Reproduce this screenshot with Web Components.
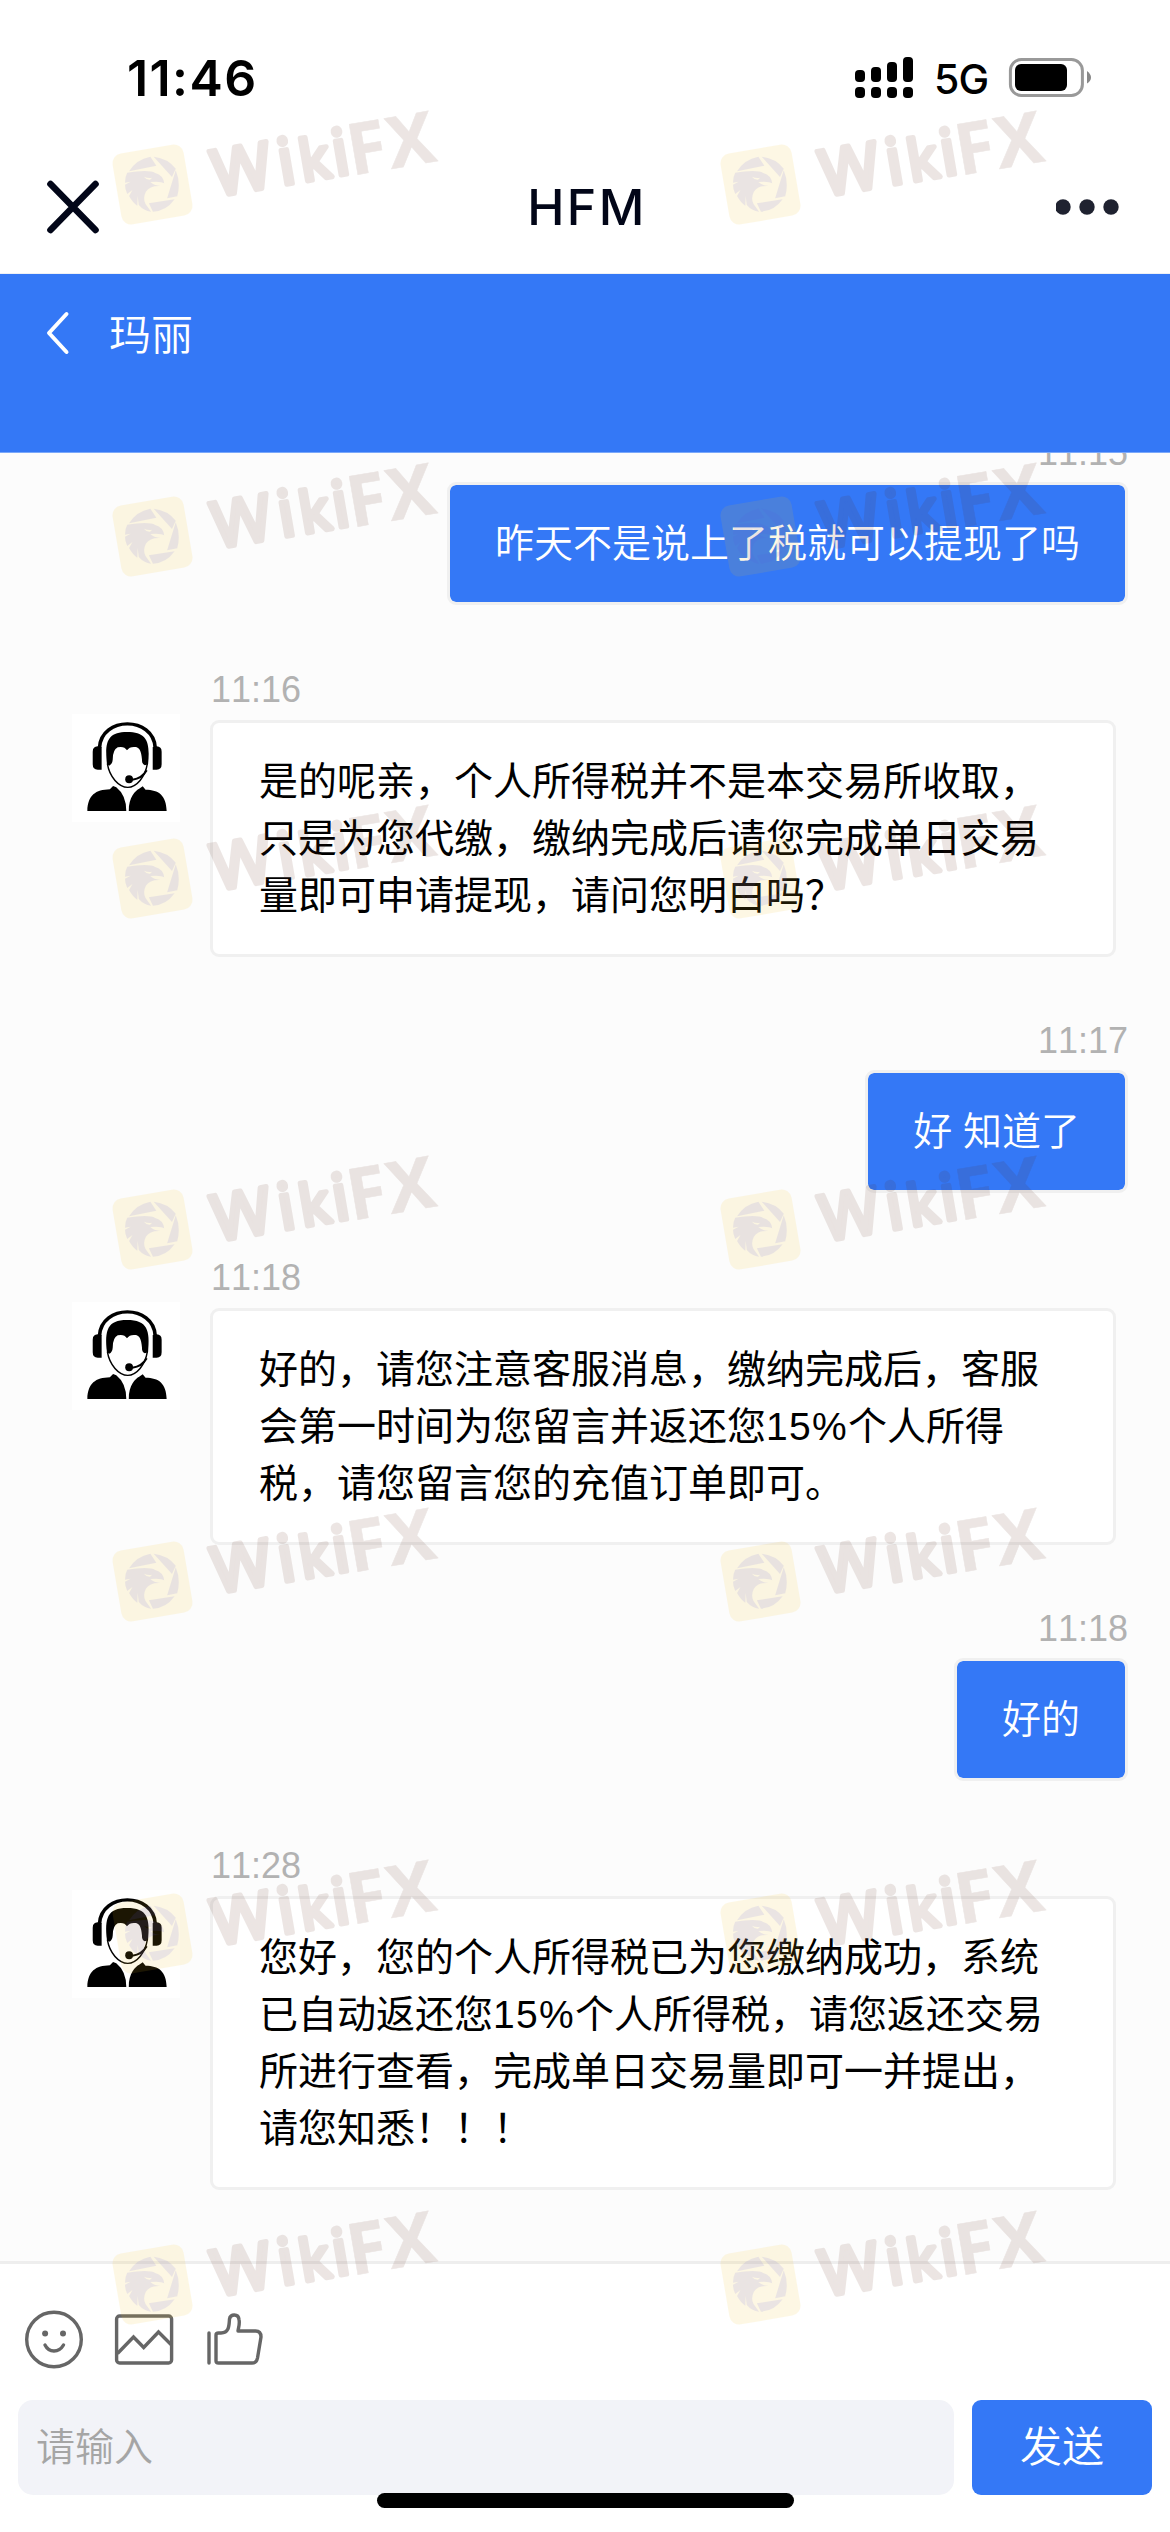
<!DOCTYPE html>
<html lang="zh-CN">
<head>
<meta charset="utf-8">
<title>HFM</title>
<style>
html,body{margin:0;padding:0}
body{width:1170px;height:2532px;overflow:hidden;background:#fff;font-family:"Liberation Sans","Noto Sans CJK SC",sans-serif;font-kerning:none}
</style>
</head>
<body>
<chat-app></chat-app>
<script>
const define = (name, html) => customElements.define(name, class extends HTMLElement {
  constructor() {
    super();
    this.attachShadow({ mode: 'open' }).innerHTML = html;
  }
});

define('status-bar', `
<style>
:host{display:flex;box-sizing:border-box;height:146px;padding:47px 79px 0 127px;justify-content:space-between;align-items:flex-start;font-family:Inter,sans-serif;color:#000}
.time{font-size:50px;line-height:62px;font-weight:600;letter-spacing:1.4px}
.right{display:flex;align-items:flex-start}
.net{font-size:41px;line-height:50px;font-weight:500;margin:7px 0 0 11px;width:74px;height:50px;letter-spacing:-.8px}
svg{display:block}
</style>
<div class="time">11:46</div>
<div class="right">
<svg width="69" height="60" viewBox="855 47 69 60"><g>
<rect x="856" y="70" width="10" height="12" rx="4"/><rect x="872" y="67" width="10" height="15" rx="4"/><rect x="888" y="62" width="10" height="20" rx="4"/><rect x="904" y="57" width="10" height="25" rx="4"/>
<rect x="856" y="87" width="10" height="11" rx="4"/><rect x="872" y="87" width="10" height="11" rx="4"/><rect x="888" y="87" width="10" height="11" rx="4"/><rect x="904" y="87" width="10" height="11" rx="4"/></g></svg>
<span class="net">5G</span>
<svg width="83" height="60" viewBox="1008 47 83 60"><rect x="1010.4" y="59.5" width="72" height="36" rx="11" fill="none" stroke="#999" stroke-width="3"/><rect x="1015" y="64" width="52" height="27" rx="6"/><path d="M1087 71Q1091 74 1091 77.500T1087 83.500Z" fill="#888"/></svg>
</div>`);

define('title-bar', `
<style>
:host{display:flex;box-sizing:border-box;height:128px;padding:0 44px 6px;justify-content:space-between;align-items:center;border-bottom:1px solid #eef0f5;font-family:Inter,sans-serif;color:#020618}
h1{margin:0 0 0 4px;font-size:50px;line-height:60px;font-weight:500;letter-spacing:2.4px}
svg{display:block}
</style>
<svg width="70" height="60" viewBox="0 0 70 60"><path d="M6.500 7L51.500 53M51.500 7L6.500 53" stroke="#020618" stroke-width="6.600" stroke-linecap="round"/></svg>
<h1>HFM</h1>
<svg width="70" height="20" viewBox="0 0 70 20" fill="#1f2230"><circle cx="7" cy="10" r="7.700"/><circle cx="31" cy="10" r="7.700"/><circle cx="55" cy="10" r="7.700"/></svg>`);

define('contact-header', `
<style>
:host{display:flex;box-sizing:border-box;height:179px;padding:30px 46px 0;align-items:flex-start;background:#3478f6;color:#fff;border-bottom:1px solid #7aa8fa;font-weight:350}
svg{display:block;margin-top:6px;width:63px;height:46px}
span{font-size:42px;line-height:64px}
</style>
<svg viewBox="0 0 63 46"><path d="M20.500 4L3 23L20.500 42" fill="none" stroke="#fff" stroke-width="4" stroke-linecap="round" stroke-linejoin="round"/></svg>
<span><slot></slot></span>`);

define('agent-avatar', `
<style>:host{display:block;width:108px;height:108px;background:#fff}svg{display:block}</style>
<svg width="108" height="108" viewBox="34 161 302.4 324" preserveAspectRatio="none">
<path d="M111 262C116 167 262 167 267 262" fill="none" stroke="#000" stroke-width="10"/>
<path d="M117 260V328H106Q92 328 92 312V274Q92 259 106 258ZM260 260V328H271Q285 328 285 312V274Q285 259 271 258Z"/>
<path d="M132 312C125 245 133 215 188 215C245 215 253 245 247 312L238 315Q229 310 230 298C228 270 222 262 212 260Q195 258 188 270Q180 256 162 261Q148 268 148 298Q147 312 138 316Z"/>
<path d="M133 310C139 350 165 381 190 381C215 381 239 350 245 310" fill="none" stroke="#000" stroke-width="4"/>
<ellipse cx="194" cy="357" rx="11" ry="12"/><path d="M203 358Q230 355 243 330" fill="none" stroke="#000" stroke-width="6"/>
<path d="M77 452C78 405 100 388 140 387L149 377L158 381Q186 405 186 452ZM193 452C192 410 213 390 222 385L232 378L240 388C277 388 298 405 299 452Z"/>
</svg>`);

define('chat-in', `
<style>
:host{display:block;padding-left:72px}
.time{display:flex;box-sizing:border-box;height:115px;padding:0 0 12px 139px;align-items:flex-end;font-size:36px;line-height:36px;color:#b2b2b2}
.row{display:flex;align-items:flex-start;gap:30px}
agent-avatar{margin-top:-6px;flex:none}
.bubble{box-sizing:border-box;width:906px;border:3px solid #f0f0f0;border-radius:9px;background:#fff;padding:30px 0 30px 46px;font-size:39px;line-height:57px;color:#000;white-space:nowrap}
</style>
<div class="time"><slot name="time"></slot></div>
<div class="row"><agent-avatar></agent-avatar><div class="bubble"><slot></slot></div></div>`);

define('chat-out', `
<style>
:host{display:flex;flex-direction:column;align-items:flex-end;padding-right:42px}
.time{display:flex;box-sizing:border-box;height:113px;padding-bottom:11px;align-items:flex-end;font-size:36px;line-height:36px;color:#b2b2b2}
.bubble{border:3px solid #f0f0f0;border-radius:9px;background:#3478f6;background-clip:padding-box;padding:30px 45px 30px;font-size:39px;line-height:57px;font-weight:350;color:#fff;white-space:nowrap}
</style>
<div class="time"><slot name="time"></slot></div>
<div class="bubble"><slot></slot></div>`);

define('message-list', `
<style>:host{display:flex;flex-direction:column;justify-content:flex-end;box-sizing:border-box;height:1808px;padding-bottom:71px;background:#fcfcfc;overflow:hidden}::slotted(*){flex:none}</style>
<slot></slot>`);

define('message-composer', `
<style>
:host{display:block;box-sizing:border-box;height:271px;border-top:3px solid #eee;background:#fff;padding-top:44px}
.tools{display:flex;align-items:flex-start;height:92px;padding-left:23px}
.entry{display:flex;gap:18px;padding:0 18px}
.field{box-sizing:border-box;width:936px;height:95px;border-radius:15px;background:#f2f3f8;padding-left:18px;font-size:39px;line-height:96px;font-weight:350;color:#a5a5a5}
.send{width:180px;height:95px;border-radius:9px;background:#3478f6;color:#fff;font-size:42px;line-height:96px;font-weight:350;text-align:center}
</style>
<div class="tools"><svg width="250" height="65" viewBox="23 2308 250 65" fill="none" stroke="#666" stroke-width="3.400">
<circle cx="54" cy="2339.500" r="27.300"/><circle cx="45.100" cy="2333.400" r="3" fill="#666" stroke="none"/><circle cx="63" cy="2333.400" r="3" fill="#666" stroke="none"/><path d="M45 2345Q48 2351 54 2351T63.500 2345" stroke-linecap="round"/>
<rect x="116.600" y="2316" width="55" height="47" rx="3"/><path d="M117.500 2353.500L133.500 2337L143.700 2347.500L158.500 2332L171 2344.500"/>
<path d="M209 2333V2363" stroke-linecap="round"/><path d="M216 2335V2361Q216 2363 218.500 2363H252Q256.500 2363 257.500 2358L261 2337Q261 2331 255.500 2331H238C238.500 2327 240 2324 239 2319.500C238.500 2313.500 230 2313.500 229.500 2319C229 2325 229.500 2333 221 2333H218.500Q216 2333 216 2335Z" stroke-linejoin="round"/>
</svg></div>
<div class="entry"><div class="field">请输入</div><div class="send">发送</div></div>`);

define('home-indicator', `<style>:host{display:block;position:absolute;left:377px;top:2493px;width:417px;height:15px;border-radius:8px;background:#000}</style>`);

define('brand-mark', `
<style>:host{display:block;position:absolute;width:370px;height:190px;pointer-events:none}svg{display:block}</style>
<svg width="370" height="190" viewBox="100 73 370 190">
<g opacity=".113"><path transform="rotate(-9.700 152.500 184.500)" fill="#f6c31e" d="M126.500 148.500H178.500A10 10 0 0 1 188.500 158.500V210.500A10 10 0 0 1 178.500 220.500H126.500A10 10 0 0 1 116.500 210.500V158.500A10 10 0 0 1 126.500 148.500Z"/></g>
<g transform="scale(.3731 .3333)" fill="#5a55e0" opacity=".11" fill-rule="evenodd">
<path d="M346 514Q365 478 403 470L419 497ZM412 470Q450 475 471 506L461 531ZM471 511Q485 548 475 589L448 595ZM399 610L468 598Q445 634 410 635Z"/>
<path d="M341 518Q400 508 416 519Q438 526 440 550Q432 543 403 546Q412 556 430 558Q402 556 391 575Q382 595 390 612L405 635Q385 632 372 615L369 588L368 617Q355 607 346 588L355 570L341 582Q335 567 335 554L350 545L335 548Q335 530 341 518ZM386 530Q392 540 402 539L408 533Q398 536 386 530Z"/></g>
<g transform="translate(152.500 184.500) rotate(-9.700)" opacity=".108" fill="#58200e" stroke="#58200e" stroke-linejoin="round">
<text font-family="Noto Sans" font-size="64" stroke-width="5" y="22.500"><tspan x="60.500">W</tspan><tspan x="127">i</tspan><tspan x="148.500" font-size="57">k</tspan><tspan x="182">i</tspan><tspan x="197.500" y="25" font-size="71.500" font-weight="700" stroke-width=".5">F</tspan><tspan x="238" y="25" font-size="71.500" font-weight="700" stroke-width=".5">X</tspan></text></g>
</svg>`);

define('mark-layer', `
<style>:host{display:block;position:absolute;left:0;top:0;width:1170px;height:2532px;overflow:hidden;pointer-events:none}</style>` +
[0, 352, 693.5, 1045.3, 1397.3, 1749, 2100].map(y => [0, 608].map(x =>
  `<brand-mark style="left:${100 + x}px;top:${73 + y}px"></brand-mark>`).join('')).join(''));

define('chat-app', `
<style>:host{display:block;position:relative;width:1170px;height:2532px;overflow:hidden;background:#fff}.n{letter-spacing:1.3px}</style>
<status-bar></status-bar>
<title-bar></title-bar>
<contact-header>玛丽</contact-header>
<message-list>
<chat-out><span slot="time">11:15</span>昨天不是说上了税就可以提现了吗</chat-out>
<chat-in><span slot="time">11:16</span>是的呢亲，个人所得税并不是本交易所收取，<br>只是为您代缴，缴纳完成后请您完成单日交易<br>量即可申请提现，请问您明白吗？</chat-in>
<chat-out><span slot="time">11:17</span>好 知道了</chat-out>
<chat-in><span slot="time">11:18</span>好的，请您注意客服消息，缴纳完成后，客服<br>会第一时间为您留言并返还您<span class="n">15%</span>个人所得<br>税，请您留言您的充值订单即可。</chat-in>
<chat-out><span slot="time">11:18</span>好的</chat-out>
<chat-in><span slot="time">11:28</span>您好，您的个人所得税已为您缴纳成功，系统<br>已自动返还您<span class="n">15%</span>个人所得税，请您返还交易<br>所进行查看，完成单日交易量即可一并提出，<br>请您知悉！！！</chat-in>
</message-list>
<message-composer></message-composer>
<home-indicator></home-indicator>
<mark-layer></mark-layer>`);
</script>
</body>
</html>
